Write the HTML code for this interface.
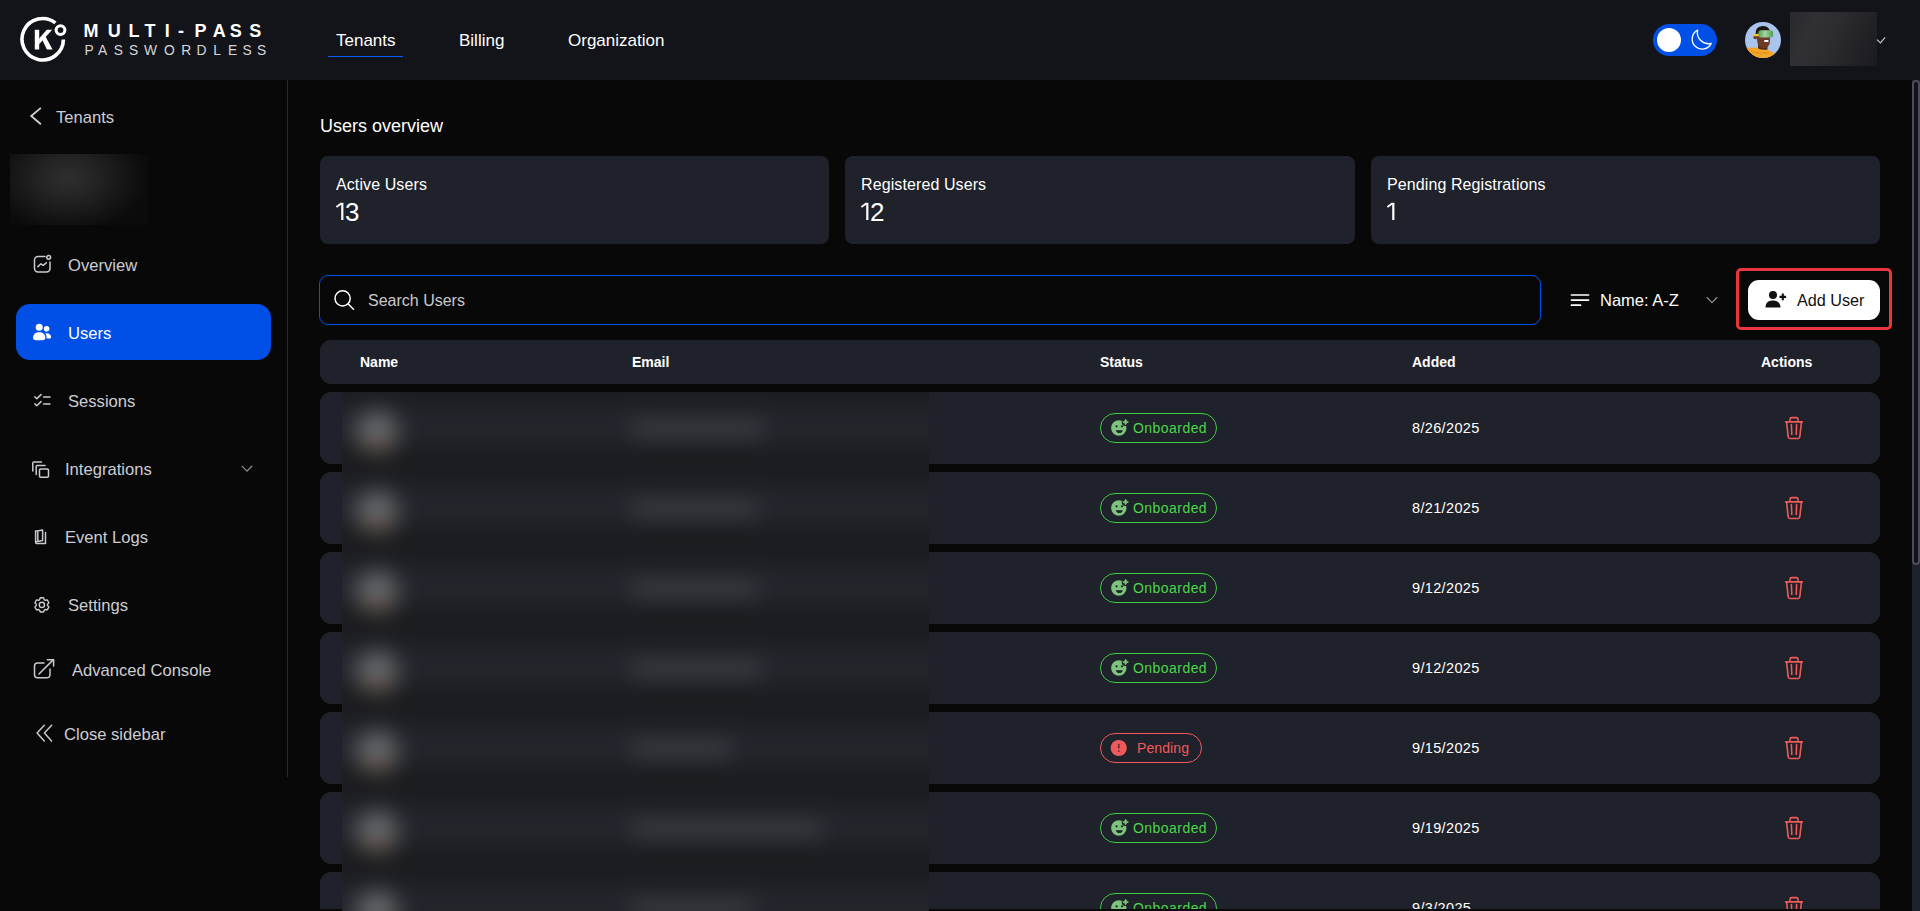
<!DOCTYPE html>
<html><head><meta charset="utf-8">
<style>
*{box-sizing:border-box;margin:0;padding:0}
html,body{width:1920px;height:911px;overflow:hidden;background:#080808;font-family:"Liberation Sans",sans-serif;color:#fff}
.abs{position:absolute}
svg{position:absolute;overflow:visible}
#hdr{position:absolute;left:0;top:0;width:1920px;height:80px;background:#13141a}
#sideline{position:absolute;left:287px;top:80px;width:1px;height:697px;background:#2b2b2f}
.nav{position:absolute;top:31px;font-size:17px;color:#fff;white-space:nowrap;line-height:20px}
.si{position:absolute;font-size:16.6px;color:#cdcdd4;white-space:nowrap;line-height:20px}
.card{position:absolute;top:156px;height:88px;background:#1f222a;border-radius:8px}
.card .l{position:absolute;left:16px;top:19px;font-size:16px;letter-spacing:0.1px;color:#fff;white-space:nowrap;line-height:20px}
.card .v{position:absolute;left:15px;top:40.6px;font-size:26px;letter-spacing:-2.6px;color:#fff;line-height:30px}
.row{position:absolute;left:320px;width:1560px;height:72px;background:#1f222a;border-radius:11px}
.th{position:absolute;top:354px;font-size:14px;font-weight:bold;color:#fff;white-space:nowrap;line-height:16px}
.pill{position:absolute;left:1100px;height:30px;border-radius:15px;border:1.5px solid #40cc40}
.pill.ok{width:117px}
.pill.pe{width:102px;border-color:#f05a5a}
.pill span{position:absolute;top:6px;left:32px;font-size:14px;letter-spacing:0.45px;line-height:16px;white-space:nowrap}
.pill.ok span{color:#4cd64a}
.pill.pe span{color:#f05a5a;left:36px;letter-spacing:0.1px}
.date{position:absolute;left:1412px;font-size:14.5px;letter-spacing:0.35px;color:#fff;line-height:16px}
</style></head><body>
<div id="hdr"></div>
<div id="sideline"></div>

<!-- logo -->
<svg style="left:0;top:0" width="280" height="80" viewBox="0 0 280 80">
  <path d="M55.4 22.9 A20.7 20.7 0 1 0 63.4 39.5" fill="none" stroke="#fff" stroke-width="3.6"/>
  <circle cx="60.5" cy="30.1" r="4.4" fill="none" stroke="#fff" stroke-width="3.1"/>
  <rect x="34.8" y="29.8" width="4.4" height="19.7" fill="#fff"/>
  <polygon points="39.1,38.6 46.8,29.8 52.2,29.8 39.1,44.2" fill="#fff"/>
  <polygon points="41.6,38.4 44.8,35.2 52.6,49.5 46.9,49.5" fill="#fff"/>
  <text x="83.6 107.8 128.4 144.5 164.8 178 194.5 212.8 229.7 249.2" y="37" font-family="Liberation Sans" font-weight="bold" font-size="18" fill="#fff">MULTI-PASS</text>
  <text x="84.4 98.1 113.75 128.9 144 164 181.25 196.6 213.3 228.1 242.5 257" y="54.9" font-family="Liberation Sans" font-size="13.8" fill="#d6d6d8">PASSWORDLESS</text>
</svg>

<div class="nav" style="left:336px">Tenants</div>
<div class="abs" style="left:328px;top:55.8px;width:75px;height:1.6px;background:#0a5cff"></div>
<div class="nav" style="left:459px">Billing</div>
<div class="nav" style="left:568px">Organization</div>

<!-- toggle -->
<div class="abs" style="left:1653px;top:24px;width:64px;height:32px;border-radius:16px;background:#0050e8"></div>
<div class="abs" style="left:1657px;top:28px;width:24px;height:24px;border-radius:12px;background:#fff"></div>
<svg style="left:1690px;top:28px" width="24" height="24" viewBox="0 0 24 24">
  <path d="M7.6 2.2 A10 10 0 1 0 21.2 15.4 A11.2 11.2 0 0 1 7.6 2.2 Z" fill="none" stroke="#fff" stroke-width="1.3" stroke-linejoin="round"/>
</svg>
<!-- avatar -->
<svg style="left:1745px;top:22px" width="36" height="36" viewBox="0 0 36 36">
  <defs><clipPath id="avc"><circle cx="18" cy="18" r="18"/></clipPath>
  <linearGradient id="gog" x1="0" x2="1"><stop offset="0" stop-color="#4fa457"/><stop offset="0.45" stop-color="#a9d6a4"/><stop offset="1" stop-color="#4b9d52"/></linearGradient></defs>
  <g clip-path="url(#avc)">
    <rect width="36" height="36" fill="#a9c5ee"/>
    <rect x="13" y="21" width="9.5" height="8" fill="#53291a"/>
    <path d="M0 26.5 Q6 25 11.5 25.8 Q16 28.5 22 27.5 Q27 29.5 30 31.5 L36 36 L0 36 Z" fill="#f4a62a"/>
    <path d="M6 29.5 Q14 31.5 24 31" fill="none" stroke="#e08c14" stroke-width="1.2"/>
    <path d="M11 10.5 Q11.5 5 18 5 Q24.5 5.5 25 11 L25 20 Q24.5 25.5 19 26.2 Q13.5 26 12.5 21 Z" fill="#6e3b26"/>
    <ellipse cx="10.3" cy="15.3" rx="1.9" ry="1.9" fill="#6e3b26"/>
    <path d="M10.6 13 Q9.8 4.5 17.5 4 Q23 4 24.6 8.2 L24.6 9.2 L12.6 10.2 L11.8 13 Z" fill="#1d1712"/>
    <rect x="13.4" y="8.2" width="14.6" height="7.4" rx="2.3" fill="url(#gog)"/>
    <rect x="9" y="12" width="4.8" height="2.3" rx="0.8" fill="#f1c52b"/>
    <rect x="19.2" y="18.1" width="4.3" height="2" rx="0.6" fill="#fff"/>
  </g>
</svg>
<div class="abs" style="left:1790px;top:12px;width:87px;height:54px;background:linear-gradient(115deg,#28282d 0%,#303035 25%,#2b2b30 50%,#222227 75%,#1a1b20 100%)"></div>
<svg style="left:1875px;top:35px" width="12" height="10" viewBox="0 0 12 10">
  <path d="M2 4.6 L5.4 7.9 L10.1 2.3" fill="none" stroke="#c4c4c8" stroke-width="1.2"/>
</svg>

<!-- sidebar -->
<svg style="left:0;top:80px" width="287" height="700" viewBox="0 80 287 700">
  <path d="M40.9 107.9 L31.2 116 L40.9 124.2" fill="none" stroke="#cfcfd6" stroke-width="1.8"/>
</svg>
<div class="si" style="left:56px;top:108px">Tenants</div>
<div class="abs" style="left:10px;top:154px;width:138px;height:71px;background:radial-gradient(ellipse 80px 55px at 58px 24px,#2e2e2e 0%,#242424 35%,#161616 70%,#0b0b0b 100%)"></div>

<svg style="left:0;top:0" width="287" height="780" viewBox="0 0 287 780">
  <g fill="none" stroke="#c9c9d0" stroke-width="1.5" stroke-linecap="round" stroke-linejoin="round">
    <!-- overview -->
    <path d="M45 256.5 H38 A3.5 3.5 0 0 0 34.5 260 V268.5 A3.5 3.5 0 0 0 38 272 H46.5 A3.5 3.5 0 0 0 50 268.5 V262"/>
    <circle cx="48.7" cy="257.3" r="1.9"/>
    <path d="M37.8 266.6 L41 263.8 L43.1 265.3 L46.3 262.8"/>
    <!-- sessions -->
    <path d="M34.8 396.8 L36.8 398.8 L41 394.6"/>
    <path d="M34.8 403.8 L36.8 405.8 L41 401.6"/>
    <path d="M43.6 396.9 H50"/>
    <path d="M43.6 403.9 H50"/>
    <!-- integrations -->
    <rect x="39.5" y="469" width="9" height="8.3" rx="1.2"/>
    <path d="M36.2 474.5 V466.5 A1 1 0 0 1 37.2 465.5 H45"/>
    <path d="M32.8 471 V463 A1 1 0 0 1 33.8 462 H41.5"/>
    <!-- event logs -->
    <path d="M35.6 531.3 V542.6 A1 1 0 0 0 36.6 543.6 H45.5 V532.4"/>
    <path d="M35.6 531.3 L42.6 529.9 V540.4 L36.4 541.7"/>
    <path d="M37.8 532 V541.2"/>
    <!-- advanced console -->
    <path d="M44 663 H37.5 A3 3 0 0 0 34.5 666 V674.8 A3 3 0 0 0 37.5 677.8 H47 A3 3 0 0 0 50 674.8 V669"/>
    <path d="M39 674 L53.4 659.6"/>
    <path d="M47.3 659.7 H53.6 V666"/>
    <!-- close sidebar -->
    <path d="M44.3 725.3 L37.1 733 L44.3 741"/>
    <path d="M51.6 725.3 L44.4 733 L51.6 741"/>
    <!-- integrations chevron -->
    <path d="M242.2 466.4 L247 471.1 L251.8 466.3" stroke="#8e8e98" stroke-width="1.3"/>
  </g>
  <!-- settings gear -->
  <g transform="translate(41.9 604.9)" fill="none" stroke="#c9c9d0" stroke-width="1.4" stroke-linejoin="round">
    <path d="M2.37 -5.08 L1.64 -7.11 L-1.64 -7.11 L-2.37 -5.08 L-3.21 -4.59 L-5.34 -4.98 L-6.98 -2.13 L-5.58 -0.49 L-5.58 0.49 L-6.98 2.13 L-5.34 4.98 L-3.21 4.59 L-2.37 5.08 L-1.64 7.11 L1.64 7.11 L2.37 5.08 L3.21 4.59 L5.34 4.98 L6.98 2.13 L5.58 0.49 L5.58 -0.49 L6.98 -2.13 L5.34 -4.98 L3.21 -4.59 Z"/>
    <circle cx="0" cy="0" r="2.6"/>
  </g>
</svg>

<div class="si" style="left:68px;top:256px">Overview</div>
<div class="abs" style="left:16px;top:304px;width:255px;height:56px;border-radius:14px;background:#0050e8"></div>
<svg style="left:0;top:0" width="287" height="400" viewBox="0 0 287 400">
  <g fill="#fff">
    <circle cx="39.2" cy="327.2" r="3.5"/>
    <path d="M33 338.6 C33 333.5 36 332.2 39.2 332.2 C42.4 332.2 45.4 333.5 45.4 338.6 C45.4 340 43 340.3 39.2 340.3 C35.4 340.3 33 340 33 338.6 Z"/>
    <circle cx="46.6" cy="328.8" r="2.8"/>
    <path d="M45.3 333.2 C48.8 333 51.2 334.2 51.2 337.4 C51.2 338.4 49.5 338.6 46.8 338.6 C46.6 336.5 46.2 334.6 45.3 333.2 Z"/>
  </g>
</svg>
<div class="si" style="left:68px;top:324px;color:#fff">Users</div>
<div class="si" style="left:68px;top:392px">Sessions</div>
<div class="si" style="left:65px;top:460px">Integrations</div>
<div class="si" style="left:65px;top:528px">Event Logs</div>
<div class="si" style="left:68px;top:596px">Settings</div>
<div class="si" style="left:72px;top:661px">Advanced Console</div>
<div class="si" style="left:64px;top:725px">Close sidebar</div>

<!-- main -->
<div class="abs" style="left:320px;top:116px;font-size:18px;line-height:20px">Users overview</div>

<div class="card" style="left:320px;width:509px"><div class="l">Active Users</div><svg style="left:0;top:42px" width="40" height="30" viewBox="0 0 40 30"><path d="M16.4 9 L21.6 5.3" stroke="#fff" stroke-width="2"/><path d="M22.3 4.8 V22" stroke="#fff" stroke-width="2.2"/></svg><div class="v" style="left:25px">3</div></div>
<div class="card" style="left:845px;width:510px"><div class="l">Registered Users</div><svg style="left:0;top:42px" width="40" height="30" viewBox="0 0 40 30"><path d="M16.4 9 L21.6 5.3" stroke="#fff" stroke-width="2"/><path d="M22.3 4.8 V22" stroke="#fff" stroke-width="2.2"/></svg><div class="v" style="left:25px">2</div></div>
<div class="card" style="left:1371px;width:509px"><div class="l">Pending Registrations</div><svg style="left:0;top:42px" width="40" height="30" viewBox="0 0 40 30"><path d="M16.4 9 L21.6 5.3" stroke="#fff" stroke-width="2"/><path d="M22.3 4.8 V22" stroke="#fff" stroke-width="2.2"/></svg></div>

<div class="abs" style="left:319px;top:275px;width:1222px;height:50px;border:1px solid #0052ee;border-radius:9px"></div>
<svg style="left:330px;top:286px" width="30" height="30" viewBox="330 286 30 30">
  <circle cx="342.6" cy="298.4" r="7.6" fill="none" stroke="#fff" stroke-width="1.5"/>
  <path d="M348.2 304 L353.5 309.3" stroke="#fff" stroke-width="1.5" stroke-linecap="round"/>
</svg>
<div class="abs" style="left:368px;top:291px;font-size:16px;color:#c9c9cd;line-height:20px">Search Users</div>

<!-- sort -->
<svg style="left:1565px;top:288px" width="30" height="24" viewBox="1565 288 30 24">
  <g stroke="#fff" stroke-width="1.7" stroke-linecap="round">
    <path d="M1571.5 295 H1588.5"/><path d="M1571.5 300.1 H1588.5"/><path d="M1571.5 305.2 H1580.5"/>
  </g>
</svg>
<div class="abs" style="left:1600px;top:290px;font-size:16.5px;color:#fff;line-height:20px">Name: A-Z</div>
<svg style="left:1700px;top:290px" width="24" height="20" viewBox="1700 290 24 20">
  <path d="M1706.8 297.2 L1712 302.6 L1717.2 297.2" fill="none" stroke="#8a8a94" stroke-width="1.3"/>
</svg>

<!-- add user -->
<div class="abs" style="left:1736px;top:268px;width:156px;height:62px;border:3px solid #e8363c;border-radius:5px"></div>
<div class="abs" style="left:1748px;top:280px;width:132px;height:40px;border-radius:11px;background:#fff"></div>
<svg style="left:1760px;top:286px" width="30" height="26" viewBox="1760 286 30 26">
  <g fill="#111">
    <circle cx="1773" cy="295" r="4"/>
    <path d="M1765.5 307.5 C1765.5 302.5 1768.8 300.6 1773 300.6 C1777.2 300.6 1780.5 302.5 1780.5 307.5 Z"/>
  </g>
  <path d="M1782.8 293.6 V300.2 M1779.5 296.9 H1786.1" stroke="#111" stroke-width="2.1"/>
</svg>
<div class="abs" style="left:1797px;top:290px;font-size:16.2px;color:#111;line-height:20px">Add User</div>

<!-- table header -->
<div class="abs" style="left:320px;top:340px;width:1560px;height:44px;background:#1f222a;border-radius:11px"></div>
<div class="th" style="left:360px">Name</div>
<div class="th" style="left:632px">Email</div>
<div class="th" style="left:1100px">Status</div>
<div class="th" style="left:1412px">Added</div>
<div class="th" style="left:1761px">Actions</div>


<svg width="0" height="0" style="position:absolute">
<defs>
<g id="smile">
  <circle cx="10.8" cy="12" r="7.7" fill="#7cc47c"/>
  <circle cx="17.6" cy="6" r="3.9" fill="#1f222a"/>
  <path d="M17.6 3.2 Q17.9 5.7 20.4 6 Q17.9 6.3 17.6 8.8 Q17.3 6.3 14.8 6 Q17.3 5.7 17.6 3.2 Z" fill="#7cc47c" stroke="#7cc47c" stroke-width="0.9" stroke-linejoin="round"/>
  <circle cx="8.6" cy="10.3" r="1.1" fill="#1f222a"/>
  <circle cx="14" cy="10.3" r="1.1" fill="#1f222a"/>
  <path d="M7.8 14.2 H14.8 C14.4 16.2 12.8 17 11.3 17 C9.8 17 8.2 16.2 7.8 14.2 Z" fill="#1f222a"/>
</g>
<g id="warn">
  <circle cx="10.75" cy="12" r="8.1" fill="#f05a5a"/>
  <path d="M10.75 7.8 V12.6" stroke="#6a2a2e" stroke-width="1.6"/>
  <rect x="9.95" y="14.2" width="1.6" height="1.6" fill="#6a2a2e"/>
</g>
<g id="trash" fill="none" stroke="#f05a5a" stroke-width="1.6" stroke-linecap="round" stroke-linejoin="round">
  <path d="M3.6 7.9 H20.4"/>
  <path d="M8 7.6 V5.2 A1.6 1.6 0 0 1 9.6 3.6 H14.4 A1.6 1.6 0 0 1 16 5.2 V7.6"/>
  <path d="M4.6 8 L6.2 22.8 A1.8 1.8 0 0 0 8 24.5 H16 A1.8 1.8 0 0 0 17.8 22.8 L19.4 8"/>
  <path d="M9.4 10.6 L9.8 20.4"/>
  <path d="M14.6 10.6 L14.2 20.4"/>
</g>
</defs></svg>
<div class="row" style="top:392px"></div>
<div class="row" style="top:472px"></div>
<div class="row" style="top:552px"></div>
<div class="row" style="top:632px"></div>
<div class="row" style="top:712px"></div>
<div class="row" style="top:792px"></div>
<div class="row" style="top:872px"></div>
<div class="pill ok" style="top:413px"><span>Onboarded</span></div>
<svg style="left:1108px;top:416px" width="22" height="22" viewBox="0 0 22 22"><use href="#smile"/></svg>
<div class="date" style="top:420px">8/26/2025</div>
<svg style="left:1782px;top:414px" width="24" height="26" viewBox="0 0 24 26"><use href="#trash"/></svg>
<div class="pill ok" style="top:493px"><span>Onboarded</span></div>
<svg style="left:1108px;top:496px" width="22" height="22" viewBox="0 0 22 22"><use href="#smile"/></svg>
<div class="date" style="top:500px">8/21/2025</div>
<svg style="left:1782px;top:494px" width="24" height="26" viewBox="0 0 24 26"><use href="#trash"/></svg>
<div class="pill ok" style="top:573px"><span>Onboarded</span></div>
<svg style="left:1108px;top:576px" width="22" height="22" viewBox="0 0 22 22"><use href="#smile"/></svg>
<div class="date" style="top:580px">9/12/2025</div>
<svg style="left:1782px;top:574px" width="24" height="26" viewBox="0 0 24 26"><use href="#trash"/></svg>
<div class="pill ok" style="top:653px"><span>Onboarded</span></div>
<svg style="left:1108px;top:656px" width="22" height="22" viewBox="0 0 22 22"><use href="#smile"/></svg>
<div class="date" style="top:660px">9/12/2025</div>
<svg style="left:1782px;top:654px" width="24" height="26" viewBox="0 0 24 26"><use href="#trash"/></svg>
<div class="pill pe" style="top:733px"><span>Pending</span></div>
<svg style="left:1108px;top:736px" width="22" height="22" viewBox="0 0 22 22"><use href="#warn"/></svg>
<div class="date" style="top:740px">9/15/2025</div>
<svg style="left:1782px;top:734px" width="24" height="26" viewBox="0 0 24 26"><use href="#trash"/></svg>
<div class="pill ok" style="top:813px"><span>Onboarded</span></div>
<svg style="left:1108px;top:816px" width="22" height="22" viewBox="0 0 22 22"><use href="#smile"/></svg>
<div class="date" style="top:820px">9/19/2025</div>
<svg style="left:1782px;top:814px" width="24" height="26" viewBox="0 0 24 26"><use href="#trash"/></svg>
<div class="pill ok" style="top:893px"><span>Onboarded</span></div>
<svg style="left:1108px;top:896px" width="22" height="22" viewBox="0 0 22 22"><use href="#smile"/></svg>
<div class="date" style="top:900px">9/3/2025</div>
<svg style="left:1782px;top:894px" width="24" height="26" viewBox="0 0 24 26"><use href="#trash"/></svg>

<div class="abs" style="left:288px;top:909px;width:1624px;height:2px;background:#080808"></div>
<!-- blur overlay -->
<div class="abs" style="left:342px;top:392px;width:587px;height:519px;overflow:hidden">
  <div class="abs" style="left:-60px;top:-60px;width:707px;height:640px;background:#1b1c20;filter:blur(11px)">
    <div class="abs" style="left:0;top:73px;width:707px;height:40px;background:#22252b"></div>
    <div class="abs" style="left:0;top:153px;width:707px;height:40px;background:#22252b"></div>
    <div class="abs" style="left:0;top:233px;width:707px;height:40px;background:#22252b"></div>
    <div class="abs" style="left:0;top:313px;width:707px;height:40px;background:#22252b"></div>
    <div class="abs" style="left:0;top:393px;width:707px;height:40px;background:#22252b"></div>
    <div class="abs" style="left:0;top:473px;width:707px;height:40px;background:#22252b"></div>
    <div class="abs" style="left:0;top:553px;width:707px;height:40px;background:#22252b"></div>
    <div class="abs" style="left:0;top:633px;width:707px;height:40px;background:#22252b"></div>
    <div class="abs" style="left:74px;top:78px;width:42px;height:44px;border-radius:21px;background:linear-gradient(180deg,#5a6268 0%,#646a70 45%,#706258 72%,#4a3e36 100%)"></div>
    <div class="abs" style="left:350px;top:91px;width:132px;height:12px;background:#45474c"></div>
    <div class="abs" style="left:74px;top:158px;width:42px;height:44px;border-radius:21px;background:linear-gradient(180deg,#5a6268 0%,#646a70 45%,#706258 72%,#4a3e36 100%)"></div>
    <div class="abs" style="left:350px;top:171px;width:126px;height:12px;background:#45474c"></div>
    <div class="abs" style="left:74px;top:238px;width:42px;height:44px;border-radius:21px;background:linear-gradient(180deg,#5a6268 0%,#646a70 45%,#706258 72%,#4a3e36 100%)"></div>
    <div class="abs" style="left:350px;top:251px;width:126px;height:12px;background:#45474c"></div>
    <div class="abs" style="left:74px;top:318px;width:42px;height:44px;border-radius:21px;background:linear-gradient(180deg,#5a6268 0%,#646a70 45%,#706258 72%,#4a3e36 100%)"></div>
    <div class="abs" style="left:350px;top:331px;width:130px;height:12px;background:#45474c"></div>
    <div class="abs" style="left:74px;top:398px;width:42px;height:44px;border-radius:21px;background:linear-gradient(180deg,#5a6268 0%,#646a70 45%,#706258 72%,#4a3e36 100%)"></div>
    <div class="abs" style="left:350px;top:411px;width:100px;height:12px;background:#45474c"></div>
    <div class="abs" style="left:74px;top:478px;width:42px;height:44px;border-radius:21px;background:linear-gradient(180deg,#5a6268 0%,#646a70 45%,#706258 72%,#4a3e36 100%)"></div>
    <div class="abs" style="left:350px;top:491px;width:190px;height:12px;background:#45474c"></div>
    <div class="abs" style="left:74px;top:558px;width:42px;height:44px;border-radius:21px;background:linear-gradient(180deg,#5a6268 0%,#646a70 45%,#706258 72%,#4a3e36 100%)"></div>
    <div class="abs" style="left:350px;top:571px;width:120px;height:12px;background:#45474c"></div>
    <div class="abs" style="left:74px;top:638px;width:42px;height:44px;border-radius:21px;background:linear-gradient(180deg,#5a6268 0%,#646a70 45%,#706258 72%,#4a3e36 100%)"></div>
    <div class="abs" style="left:350px;top:651px;width:120px;height:12px;background:#45474c"></div>
  </div>
</div>
<!-- scrollbar -->
<div class="abs" style="left:1912px;top:80px;width:8px;height:831px;background:#1f222a"></div>
<div class="abs" style="left:1912px;top:80px;width:8px;height:485px;border-radius:4px;background:#121319;border:2px solid #4d4c5e"></div>
</body></html>
